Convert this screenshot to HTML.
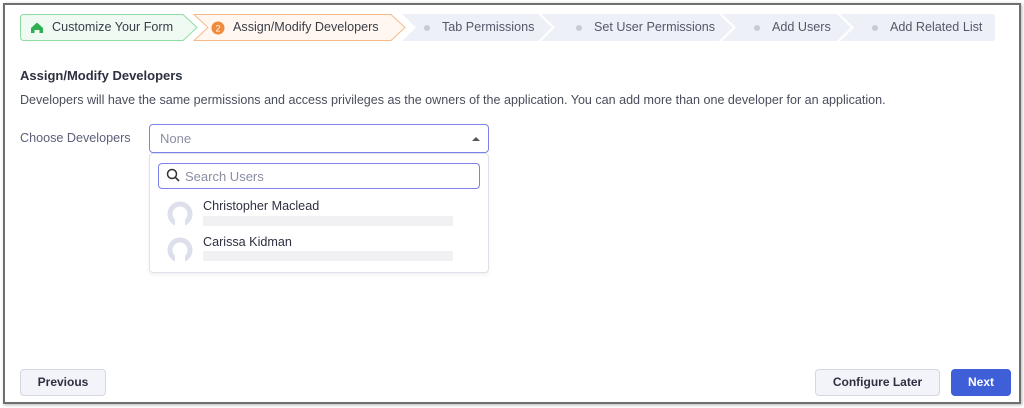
<!DOCTYPE html><html><head><style>
*{margin:0;padding:0;box-sizing:border-box}
body{width:1024px;height:408px;background:#fff;font-family:"Liberation Sans",sans-serif;position:relative;overflow:hidden}
.frame{position:absolute;left:3px;top:3px;width:1018px;height:401px;border:2px solid #6f6f6f;box-shadow:1px 1px 3px rgba(0,0,0,.3)}
.t{position:absolute;font-size:13px;color:#3a3d4a;white-space:nowrap}
.btn{position:absolute;height:27px;border:1px solid #d4d7e3;border-radius:4px;background:#f3f4f9;font-size:12px;color:#2d3040;text-align:center;line-height:25px;font-weight:bold}
</style></head><body>
<div class="frame"></div>
<svg style="position:absolute;left:0;top:0" width="1024" height="60">
<path d="M840 14 H992 Q995 14 995 17 V38 Q995 41 992 41 H840 L854 27.5 Z" fill="#eef0f8"/>
<path d="M722 14 H837 L851 27.5 L837 41 H722 L736 27.5 Z" fill="#eef0f8"/>
<path d="M541 14 H719 L733 27.5 L719 41 H541 L555 27.5 Z" fill="#eef0f8"/>
<path d="M402 14 H538 L552 27.5 L538 41 H402 L416 27.5 Z" fill="#eef0f8"/>
<path d="M194 14.5 H391 L405 27.5 L391 40.5 H194 L208 27.5 Z" fill="#fff7f0" stroke="#f6b98a" stroke-width="1"/>
<path d="M24 14.5 H183 L197 27.5 L183 40.5 H24 Q20.5 40.5 20.5 37 V18 Q20.5 14.5 24 14.5 Z" fill="#effbf2" stroke="#8fdca2" stroke-width="1"/>
<path d="M31 28 L37 22.5 L43 28 V33 H39.5 V30 H34.5 V33 H31 Z" fill="#2fae52"/>
<circle cx="218" cy="28" r="6.5" fill="#f08a3c"/>
<text x="218" y="31.5" font-size="9" fill="#fff" text-anchor="middle" font-family="Liberation Sans">2</text>
<circle cx="427" cy="28" r="3" fill="#c8cad6"/>
<circle cx="579" cy="28" r="3" fill="#c8cad6"/>
<circle cx="757" cy="28" r="3" fill="#c8cad6"/>
<circle cx="875" cy="28" r="3" fill="#c8cad6"/>
</svg>
<div class="t" style="left:52px;top:20px;font-size:12.6px">Customize Your Form</div>
<div class="t" style="left:233px;top:20px;font-size:12.6px">Assign/Modify Developers</div>
<div class="t" style="left:442px;top:20px;color:#555868;font-size:12.6px">Tab Permissions</div>
<div class="t" style="left:594px;top:20px;color:#555868;font-size:12.6px">Set User Permissions</div>
<div class="t" style="left:772px;top:20px;color:#555868;font-size:12.6px">Add Users</div>
<div class="t" style="left:890px;top:20px;color:#555868;font-size:12.6px">Add Related List</div>
<div class="t" style="left:20px;top:68px;font-weight:bold;color:#2d3040">Assign/Modify Developers</div>
<div class="t" style="left:20px;top:93px;color:#4a4d5c;font-size:12.55px">Developers will have the same permissions and access privileges as the owners of the application. You can add more than one developer for an application.</div>
<div class="t" style="left:20px;top:131px;color:#5b6078;font-size:12.6px">Choose Developers</div>
<div style="position:absolute;left:149px;top:124px;width:340px;height:29px;border:1.5px solid #7c82ec;border-radius:4px"></div>
<div class="t" style="left:160px;top:131px;color:#8a8ea3">None</div>
<div style="position:absolute;left:472px;top:137px;width:0;height:0;border-left:4px solid transparent;border-right:4px solid transparent;border-bottom:4px solid #555"></div>
<div style="position:absolute;left:149px;top:153px;width:340px;height:120px;border:1px solid #dfe1ea;border-radius:4px;box-shadow:0 2px 4px rgba(0,0,0,.06);background:#fff"></div>
<div style="position:absolute;left:158px;top:163px;width:322px;height:26px;border:1.5px solid #7c82ec;border-radius:4px"></div>
<svg style="position:absolute;left:166px;top:168px" width="14" height="14"><circle cx="6" cy="6" r="4.5" fill="none" stroke="#333" stroke-width="1.5"/><path d="M9.3 9.3 L13 13" stroke="#333" stroke-width="1.6"/></svg>
<div class="t" style="left:185px;top:169px;color:#8a8ea3">Search Users</div>
<svg style="position:absolute;left:167px;top:200px" width="28" height="64">
<circle cx="13" cy="14" r="10" fill="none" stroke="#dde0ea" stroke-width="5"/><rect x="8" y="19" width="10" height="9" fill="#fff"/>
<circle cx="13" cy="50" r="10" fill="none" stroke="#dde0ea" stroke-width="5"/><rect x="8" y="55" width="10" height="9" fill="#fff"/>
</svg>
<div class="t" style="left:203px;top:199px;color:#2d3040;font-size:12.6px">Christopher Maclead</div>
<div style="position:absolute;left:203px;top:216px;width:250px;height:10px;background:#f1f1f3"></div>
<div class="t" style="left:203px;top:235px;color:#2d3040;font-size:12.6px">Carissa Kidman</div>
<div style="position:absolute;left:203px;top:251px;width:250px;height:10px;background:#f1f1f3"></div>
<div class="btn" style="left:20px;top:369px;width:86px">Previous</div>
<div class="btn" style="left:815px;top:369px;width:125px">Configure Later</div>
<div class="btn" style="left:951px;top:369px;width:60px;background:#3f5fd9;border-color:#3f5fd9;color:#fff">Next</div>
</body></html>
